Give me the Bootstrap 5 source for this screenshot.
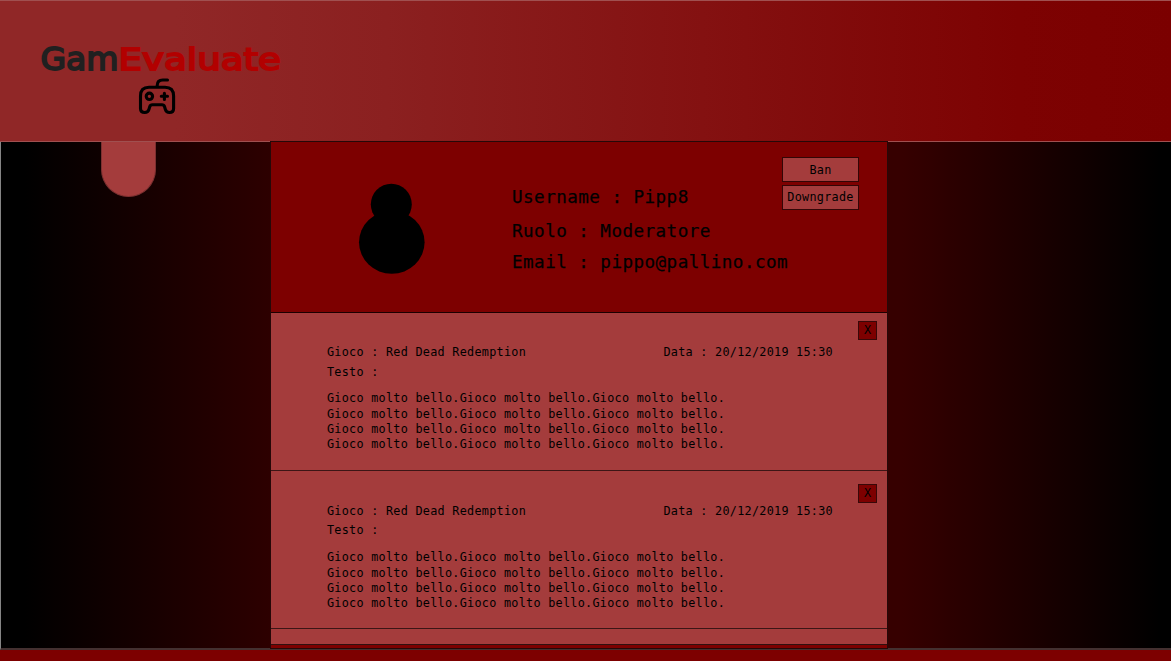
<!DOCTYPE html>
<html lang="it">
<head>
<meta charset="utf-8">
<meta name="viewport" content="width=device-width, initial-scale=1">
<title>GamEvaluate</title>
<link rel="stylesheet" href="https://cdn.jsdelivr.net/npm/bootstrap@5.3.0/dist/css/bootstrap.min.css">
<style>
body{height:661px;color:#000;font-family:"DejaVu Sans Mono","Liberation Mono",monospace;font-size:11.8px;letter-spacing:.27px;line-height:15.3px;background:#7d0000}
.site-header{height:142px;border-top:1px solid #a05050;border-bottom:1px solid #a05050;background:linear-gradient(90deg,#902727 0%,#902727 15%,#8b2020 33%,#7d0202 87%,#7b0000 100%);padding:38px 0 0 36px}
.brand{width:250px;letter-spacing:0}
.stage{height:508px;border-left:1px solid #858585;border-bottom:2px solid #443030;background:linear-gradient(90deg,#000 0,#000 2%,#2d0000 23%,#380000 50%,#360000 77%,#000 99%)}
.side-tab{width:55px;height:55px;margin-left:100px;background:#a43c3c;border:1px solid #7c3030;border-top:0;border-radius:0 0 28px 28px}
.panel{width:618px;height:508px;margin:-1px 283px 0 0;border:1px solid #260808;background:#7d0000}
.profile{height:171px;border-bottom:1px solid #1c0000}
.avatar{width:68px;margin:41px 0 0 87px}
.facts{width:240px;margin:44px 0 0 86px;font-size:17.6px;letter-spacing:.45px;line-height:22px;-webkit-text-stroke:.25px #000}
.facts div{white-space:pre}
.role{margin-top:12px}
.mail{margin-top:9px}
.actions{width:77px;margin:15px 28px 0 0}
.act{height:25px;border:1px solid #330606;border-radius:0;background:#a43c3c;color:#000;font-size:inherit;letter-spacing:inherit;line-height:24px;padding:0}
.act+.act{margin-top:3px;line-height:21px}
.review{height:158px;background:#a43c3c;border-bottom:1px solid #3c1515;padding:8px 10px 0 56px}
.review.second{padding-top:13px}
.kill{width:19px;height:19px;border:1px solid #380808;border-radius:0;background:#7d0000;color:#000;font-size:inherit;letter-spacing:0;line-height:17px;padding:0}
.meta{height:16px;margin-top:5px;padding-right:44px}
.second .meta{margin-top:1px}
.label{margin-top:4px}
.second .label{margin-top:3px}
.copy{margin-top:11px;white-space:pre}
.second .copy{margin-top:12px}
.next{height:16px;background:#a43c3c;border-bottom:1px solid #301010}
</style>
<script src="https://cdn.jsdelivr.net/npm/bootstrap@5.3.0/dist/js/bootstrap.bundle.min.js"></script>
</head>
<body class="overflow-hidden">
<header class="site-header">
  <svg class="brand d-block" height="80" viewBox="36 39 250 80" aria-label="GamEvaluate">
    <g font-family="DejaVu Sans, sans-serif" stroke-width="1.8">
      <text x="40.500" y="70" font-size="32" fill="#202020" stroke="#202020" textLength="78" lengthAdjust="spacingAndGlyphs">Gam</text>
      <text x="118.500" y="70" font-size="30" fill="#b20000" stroke="#b20000" textLength="162.500" lengthAdjust="spacingAndGlyphs">Evaluate</text>
    </g>
    <g fill="none" stroke="#000" stroke-width="3.100" stroke-linecap="round" stroke-linejoin="round">
      <path d="M157.200 87V85.500Q157.200 80 162.800 80H167.500M149 87.200H165Q173.600 87.200 173.600 96V108.500Q173.600 112.500 169.500 112.500Q166.300 112.500 165.400 109.500L164.500 106.500Q163.900 104.700 162 104.700H152.300Q150.400 104.700 149.800 106.500L148.900 109.500Q148 112.500 144.800 112.500Q140.500 112.500 140.500 108.500V96Q140.500 87.200 149 87.200Z"/>
      <circle cx="149.400" cy="96.300" r="3.200"/>
      <path d="M161.300 96.300H167.500M164.400 93.200V99.400"/>
    </g>
  </svg>
</header>
<main class="stage d-flex justify-content-between align-items-start">
  <div class="side-tab"></div>
  <section class="panel">
    <div class="profile d-flex">
      <svg class="avatar flex-shrink-0" height="92" viewBox="358 183 68 92"><circle cx="391.300" cy="204.300" r="20.500"/><ellipse cx="391.800" cy="242.300" rx="32.800" ry="31.500"/></svg>
      <div class="facts flex-shrink-0">
        <div>Username : Pipp8</div>
        <div class="role">Ruolo : Moderatore</div>
        <div class="mail">Email : pippo@pallino.com</div>
      </div>
      <div class="actions d-flex flex-column flex-shrink-0 ms-auto">
        <button class="act btn">Ban</button>
        <button class="act btn">Downgrade</button>
      </div>
    </div>
    <article class="review">
      <div class="d-flex"><button class="kill btn ms-auto">X</button></div>
      <div class="meta d-flex justify-content-between"><span>Gioco : Red Dead Redemption</span><span>Data : 20/12/2019 15:30</span></div>
      <div class="label">Testo :</div>
      <div class="copy">Gioco molto bello.Gioco molto bello.Gioco molto bello.
Gioco molto bello.Gioco molto bello.Gioco molto bello.
Gioco molto bello.Gioco molto bello.Gioco molto bello.
Gioco molto bello.Gioco molto bello.Gioco molto bello.</div>
    </article>
    <article class="review second">
      <div class="d-flex"><button class="kill btn ms-auto">X</button></div>
      <div class="meta d-flex justify-content-between"><span>Gioco : Red Dead Redemption</span><span>Data : 20/12/2019 15:30</span></div>
      <div class="label">Testo :</div>
      <div class="copy">Gioco molto bello.Gioco molto bello.Gioco molto bello.
Gioco molto bello.Gioco molto bello.Gioco molto bello.
Gioco molto bello.Gioco molto bello.Gioco molto bello.
Gioco molto bello.Gioco molto bello.Gioco molto bello.</div>
    </article>
    <div class="next"></div>
  </section>
</main>
<footer></footer>
</body>
</html>
